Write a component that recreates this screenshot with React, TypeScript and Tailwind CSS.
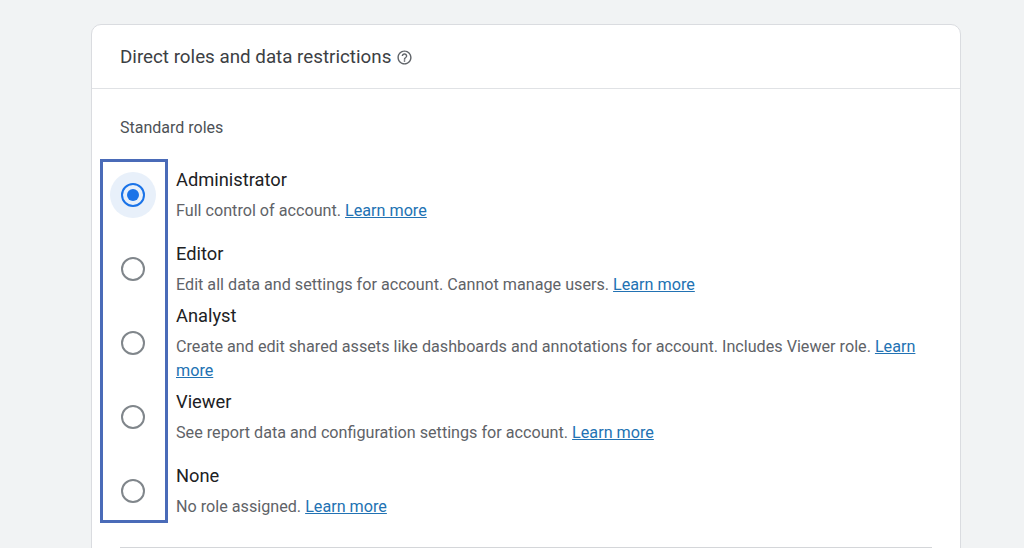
const roles = [
  { name: "Administrator", text: "Full control of account.", checked: true },
  { name: "Editor", text: "Edit all data and settings for account. Cannot manage users." },
  { name: "Analyst", text: "Create and edit shared assets like dashboards and annotations for account. Includes Viewer role." },
  { name: "Viewer", text: "See report data and configuration settings for account." },
  { name: "None", text: "No role assigned." },
];

function Radio({ checked }: { checked?: boolean }) {
  return (
    <div className={`flex h-[46px] w-[46px] shrink-0 items-center justify-center rounded-full ${checked ? "bg-[#e8f0fa]" : ""}`}>
      <div className={`flex h-[24px] w-[24px] items-center justify-center rounded-full border-2 ${checked ? "border-[#1a73e8]" : "border-[#80868b]"}`}>
        {checked && <div className="h-3 w-3 rounded-full bg-[#1a73e8]" />}
      </div>
    </div>
  );
}

export default function App() {
  return (
    <div className="h-[548px] overflow-hidden bg-[#f1f3f4] pl-[91px] pr-[63px] pt-6 font-['Roboto',sans-serif]">
      <div className="h-[600px] rounded-t-[10px] border border-[#dadce0] bg-white">
        <div className="flex h-[64px] items-center border-b border-[#e0e2e5] pl-[28px] pt-[2px]">
          <h2 className="text-[18.8px] text-[#3c4043]">Direct roles and data restrictions</h2>
          <svg className="ml-[5px] h-[17px] w-[17px] text-[#5f6368]" viewBox="0 0 24 24" fill="currentColor">
            <path d="M11 18h2v-2h-2v2zm1-16C6.48 2 2 6.48 2 12s4.48 10 10 10 10-4.48 10-10S17.52 2 12 2zm0 18c-4.41 0-8-3.59-8-8s3.59-8 8-8 8 3.59 8 8-3.59 8-8 8zm0-14c-2.21 0-4 1.79-4 4h2c0-1.1.9-2 2-2s2 .9 2 2c0 2-3 1.75-3 5h2c0-2.25 3-2.5 3-5 0-2.21-1.79-4-4-4z" />
          </svg>
        </div>
        <div className="relative pl-[18px] pr-[28px]">
          <p className="h-[69px] pl-[10px] pt-[29px] text-[16px] leading-5 text-[#4d5156]">Standard roles</p>
          {roles.map((role) => (
            <div key={role.name} className="flex h-[74px] items-center">
              <Radio checked={role.checked} />
              <div className="ml-[20px] min-w-0 flex-1">
                <div className="text-[18.3px] leading-6 text-[#202124]">{role.name}</div>
                <p className="mt-[7px] text-[16.17px] leading-[24px] text-[#5f6368]">
                  {role.text} <a className="text-[#2272b3] underline">Learn more</a>
                </p>
              </div>
            </div>
          ))}
          <div className="absolute left-[8px] top-[70px] h-[364px] w-[68px] border-[3px] border-[#4a6bb8]" />
          <div className="ml-[10px] mt-[19px] border-t-2 border-[#d4d6d9]" />
        </div>
      </div>
    </div>
  );
}
